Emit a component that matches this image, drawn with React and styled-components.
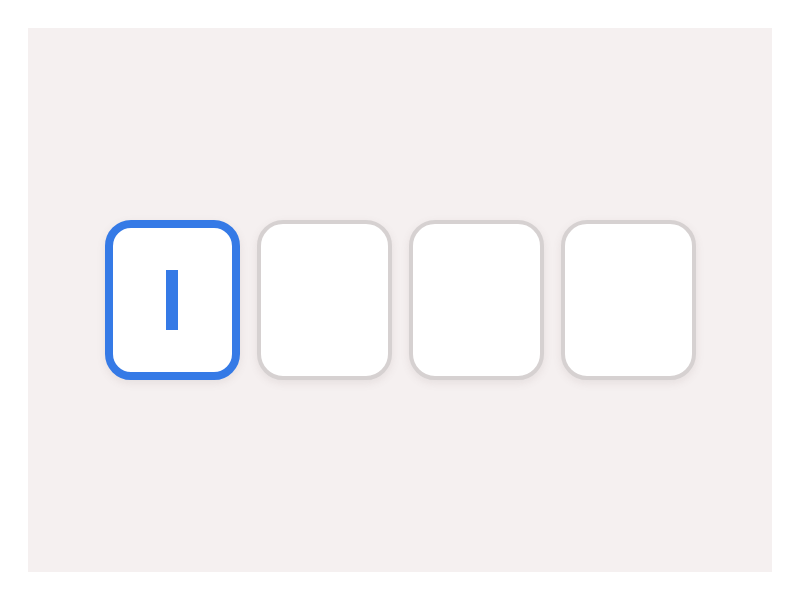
import React from 'react';
import styled, { createGlobalStyle } from 'styled-components';

const GlobalStyle = createGlobalStyle`
  html, body {
    margin: 0;
    padding: 0;
    background: #ffffff;
    font-family: "Inter", "Liberation Sans", sans-serif;
  }
`;

const Page = styled.div`
  width: 800px;
  height: 600px;
  padding: 28px;
  box-sizing: border-box;
`;

const Panel = styled.div`
  width: 100%;
  height: 100%;
  background: #f5f0f0;
  display: flex;
  align-items: center;
  justify-content: center;
`;

const Row = styled.div`
  display: flex;
  gap: 17px;
`;

const Cell = styled.div`
  width: 135px;
  height: 160px;
  box-sizing: border-box;
  background: #ffffff;
  border-radius: 26px;
  border: ${(p) => (p.$active ? '8px solid #357ae6' : '4px solid #d6d1d1')};
  box-shadow: 0 3px 8px rgba(120, 100, 100, 0.12);
  display: flex;
  align-items: center;
  justify-content: center;
`;

const Caret = styled.div`
  width: 12px;
  height: 60px;
  background: #357ae6;
`;

export default function App() {
  const cells = [0, 1, 2, 3];
  return (
    <>
      <GlobalStyle />
      <Page>
        <Panel>
          <Row>
            {cells.map((i) => (
              <Cell key={i} $active={i === 0}>
                {i === 0 && <Caret />}
              </Cell>
            ))}
          </Row>
        </Panel>
      </Page>
    </>
  );
}
